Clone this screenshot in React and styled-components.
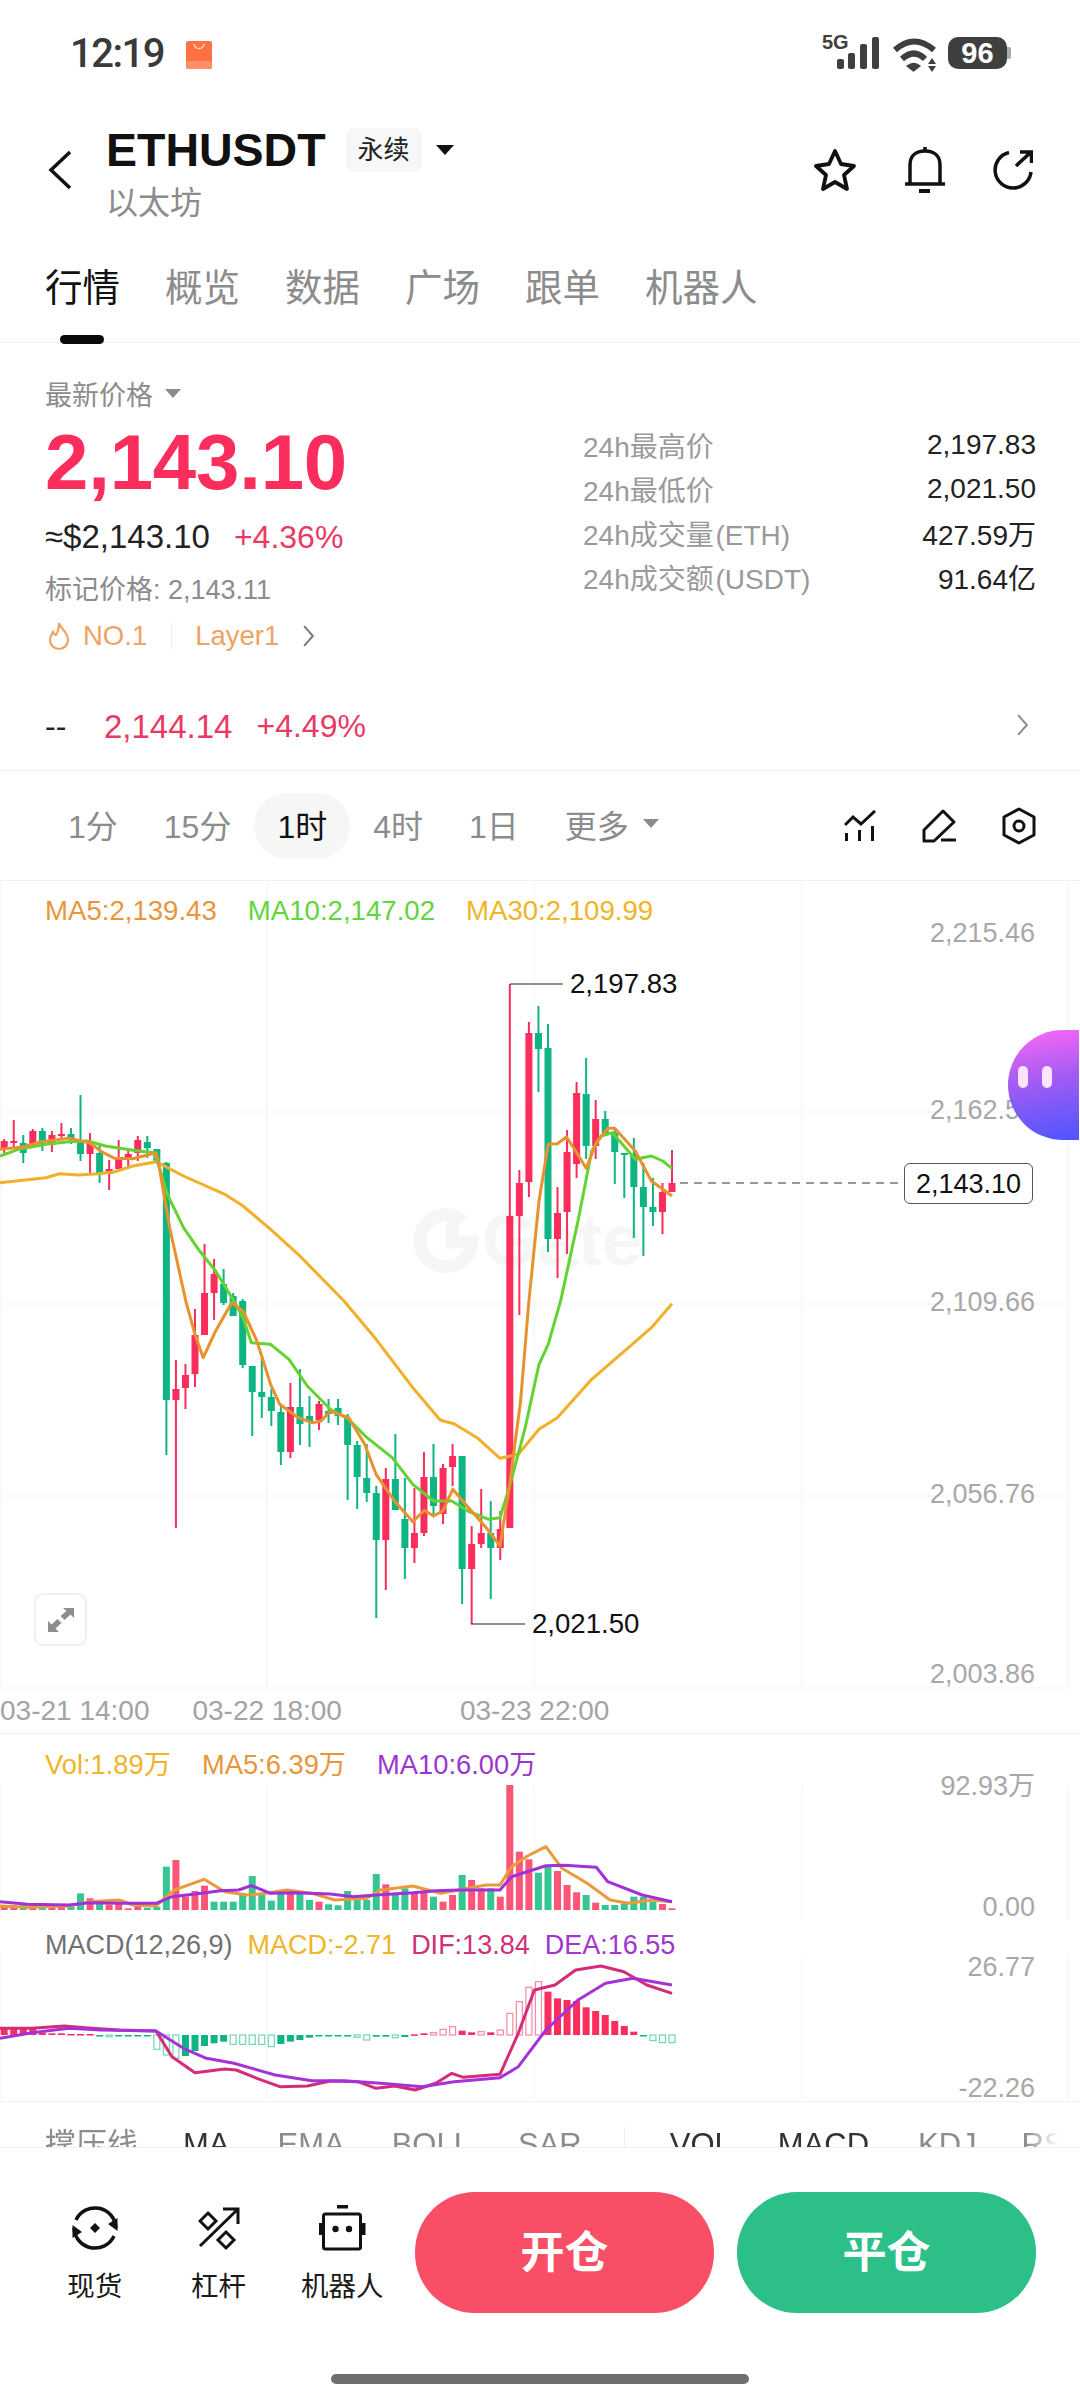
import styled, { createGlobalStyle } from "styled-components";

const GlobalStyle = createGlobalStyle`
  html, body { margin: 0; padding: 0; background: #fff; }
  * { box-sizing: border-box; }
`;

const RED = "#fa2d5c";
const GREEN = "#0fb483";
const VOL_RED = "#fb5677";
const VOL_GREEN = "#37c594";
const GRID = "#f3f3f4";

const Page = styled.div`
  position: relative;
  width: 1080px;
  height: 2400px;
  overflow: hidden;
  background: #fff;
  color: #1a1a1a;
  font-family: "Liberation Sans", "Noto Sans CJK SC", sans-serif;
`;

const StatusBar = styled.div`
  height: 110px;
  padding: 34px 73px 0 70px;
  display: flex;
  align-items: flex-start;
`;
const Clock = styled.div`
  font-family: Roboto, "Liberation Sans", sans-serif;
  font-size: 40px;
  font-weight: 500;
  line-height: 40px;
  color: #3a3a3a;
  letter-spacing: -1.5px;
  width: 116px;
`;
const StatusRight = styled.div`
  margin-left: auto;
  display: flex;
  align-items: flex-start;
`;
const Battery = styled.div`
  width: 59px;
  height: 32px;
  margin: 3px 0 0 10px;
  border-radius: 10px;
  background: #3f3f3f;
  color: #fff;
  font-size: 29px;
  font-weight: 700;
  line-height: 32px;
  text-align: center;
  position: relative;
  &::after {
    content: "";
    position: absolute;
    right: -4px;
    top: 10px;
    width: 4px;
    height: 12px;
    border-radius: 0 2px 2px 0;
    background: #aaa;
  }
`;

const Header = styled.div`
  height: 120px;
  padding: 0 47px 0 48px;
  display: flex;
  align-items: center;
`;
const TitleCol = styled.div`
  margin-left: 34px;
  padding-top: 5px;
  display: flex;
  flex-direction: column;
`;
const TitleRow = styled.div`
  height: 60px;
  display: flex;
  align-items: center;
`;
const Symbol = styled.div`
  font-size: 46.5px;
  font-weight: 700;
  color: #111;
`;
const Chip = styled.div`
  margin-left: 20px;
  width: 76px;
  height: 44px;
  border-radius: 8px;
  background: #f7f7f7;
  font-size: 26px;
  line-height: 44px;
  text-align: center;
  color: #222;
`;
const Caret = styled.span`
  width: 0;
  height: 0;
  margin-left: ${(p) => p.$gap || 0}px;
  border-left: ${(p) => p.$size}px solid transparent;
  border-right: ${(p) => p.$size}px solid transparent;
  border-top: ${(p) => p.$size * 1.2}px solid ${(p) => p.$color};
`;
const CoinName = styled.div`
  font-size: 32px;
  line-height: 46px;
  color: #8c8c8c;
`;
const HeaderIcons = styled.div`
  margin-left: auto;
  display: flex;
  align-items: center;
  gap: 48px;
`;

const TabBar = styled.div`
  height: 113px;
  padding: 36px 0 0 45px;
  display: flex;
  gap: 45px;
  border-bottom: 1px solid #f2f2f2;
`;
const Tab = styled.div`
  position: relative;
  height: 77px;
  font-size: 37.5px;
  line-height: 44px;
  color: ${(p) => (p.$active ? "#111" : "#8c8c8c")};
  &::after {
    content: "";
    display: ${(p) => (p.$active ? "block" : "none")};
    position: absolute;
    left: 15px;
    bottom: -1px;
    width: 44px;
    height: 9px;
    border-radius: 5px;
    background: #0a0a0a;
  }
`;

const Summary = styled.div`
  height: 342px;
  display: flex;
`;
const PriceCol = styled.div`
  width: 583px;
  padding: 30px 0 0 45px;
`;
const SmallLabel = styled.div`
  display: flex;
  align-items: center;
  height: 40px;
  font-size: 27px;
  color: #8c8c8c;
`;
const BigPrice = styled.div`
  height: 86px;
  margin-top: 6px;
  font-size: 78px;
  font-weight: 700;
  line-height: 86px;
  color: ${RED};
  letter-spacing: -0.2px;
`;
const ApproxRow = styled.div`
  height: 44px;
  margin-top: 10px;
  display: flex;
  align-items: center;
  font-size: 33px;
  color: #222;
`;
const Change = styled.span`
  margin-left: ${(p) => p.$gap}px;
  font-size: 32px;
  color: #e93a63;
`;
const MarkRow = styled(SmallLabel)`
  margin-top: 8px;
`;
const TagRow = styled.div`
  height: 40px;
  margin-top: 9px;
  display: flex;
  align-items: center;
  font-size: 27.5px;
  color: #f1a263;
`;
const TagDivider = styled.span`
  width: 1px;
  height: 26px;
  margin: 0 23px 0 24px;
  background: #f0f0f0;
`;
const TagChevron = styled.span`
  margin-left: 24px;
  display: flex;
`;
const StatsCol = styled.div`
  flex: 1;
  padding: 80px 44px 0 0;
`;
const StatRow = styled.div`
  height: 44px;
  display: flex;
  align-items: center;
  justify-content: space-between;
  font-size: 28px;
`;
const StatLabel = styled.span`
  color: #9a9a9a;
  word-spacing: -6px;
`;
const StatValue = styled.span`
  color: #222;
`;

const FutureRow = styled.div`
  height: 86px;
  padding: 0 51px 2px 45px;
  display: flex;
  align-items: center;
  font-size: 33px;
  border-bottom: 1px solid #f2f2f2;
`;
const Dashes = styled.span`
  width: 59px;
  color: #222;
  font-size: 32px;
`;
const FuturePrice = styled.span`
  color: #e93a63;
`;
const PushRight = styled.span`
  margin-left: auto;
  padding-bottom: 4px;
  display: flex;
`;

const TimeBar = styled.div`
  height: 110px;
  padding: 0 44px 0 45px;
  display: flex;
  align-items: center;
  border-bottom: 1px solid #f2f2f2;
`;
const TimeItem = styled.div`
  height: 66px;
  padding: 0 23px 4px;
  display: flex;
  align-items: center;
  border-radius: 33px;
  font-size: 32px;
  color: ${(p) => (p.$active ? "#111" : "#8c8c8c")};
  background: ${(p) => (p.$active ? "#f6f6f6" : "transparent")};
`;
const ChartTools = styled.div`
  margin-left: auto;
  display: flex;
  align-items: center;
  gap: 46px;
`;

const Pane = styled.div`
  position: relative;
  height: ${(p) => p.$height}px;
  border-bottom: ${(p) => (p.$line ? `1px solid ${GRID}` : "none")};
`;
const PaneSvg = styled.svg`
  display: block;
`;
const Legend = styled.div`
  position: absolute;
  left: 45px;
  top: ${(p) => p.$top}px;
  display: flex;
  gap: ${(p) => p.$gap}px;
  font-size: ${(p) => p.$size}px;
  line-height: 32px;
  white-space: nowrap;
`;
const LegendItem = styled.span`
  color: ${(p) => p.$color};
`;
const AxisTick = styled.div`
  position: absolute;
  right: 45px;
  top: ${(p) => p.$top}px;
  font-size: 27px;
  line-height: 32px;
  color: #a8a8a8;
  transform: translateY(-50%);
`;
const ExtremeLabel = styled.div`
  position: absolute;
  left: ${(p) => p.$left}px;
  top: ${(p) => p.$top}px;
  font-size: 27.6px;
  line-height: 32px;
  color: #111;
  transform: translateY(-50%);
`;
const LastPrice = styled.div`
  position: absolute;
  left: 904px;
  top: 282px;
  width: 129px;
  height: 41px;
  border: 1px solid #555;
  border-radius: 6px;
  background: #fff;
  font-size: 27px;
  line-height: 40px;
  text-align: center;
  color: #111;
`;
const ExpandButton = styled.div`
  position: absolute;
  left: 34px;
  top: 712px;
  width: 53px;
  height: 53px;
  display: flex;
  align-items: center;
  justify-content: center;
  border: 2px solid #f0f0f0;
  border-radius: 9px;
  background: #fff;
`;
const DateRow = styled.div`
  height: 45px;
  display: flex;
  align-items: center;
  font-size: 28px;
  color: #a3a3a3;
  border-bottom: 1px solid ${GRID};
`;
const DateItem = styled.span`
  margin-left: ${(p) => p.$gap}px;
`;

const IndicatorRow = styled.div`
  height: 45px;
  overflow: hidden;
  padding: 24px 0 0 45px;
  display: flex;
  align-items: flex-start;
  font-size: 31px;
  line-height: 38px;
  white-space: nowrap;
  mask-image: linear-gradient(to right, #000 95%, transparent 98%);
`;
const Indicator = styled.span`
  flex: none;
  margin-left: ${(p) => p.$gap || 0}px;
  color: ${(p) => (p.$on ? "#333" : "#8c8c8c")};
`;
const IndicatorDivider = styled.span`
  flex: none;
  width: 1px;
  height: 30px;
  margin-left: 42px;
  background: #f0f0f0;
`;

const BottomBar = styled.div`
  height: 253px;
  padding-top: 44px;
  border-top: 1px solid #f0f0f0;
  display: flex;
  flex-direction: column;
`;
const ActionRow = styled.div`
  height: 121px;
  padding: 0 44px 0 33px;
  display: flex;
  align-items: flex-start;
`;
const Tool = styled.div`
  width: 124px;
  height: 121px;
  display: flex;
  flex-direction: column;
  align-items: center;
  font-size: 27.5px;
  color: #1a1a1a;
`;
const ToolIcon = styled.div`
  height: 72px;
  padding-top: 12px;
`;
const TradeButton = styled.div`
  flex: none;
  width: 299px;
  height: 121px;
  margin-left: ${(p) => p.$gap}px;
  border-radius: 60px;
  background: ${(p) => p.$color};
  color: #fff;
  font-size: 44px;
  font-weight: 700;
  line-height: 121px;
  text-align: center;
`;
const HomeBar = styled.div`
  width: 418px;
  height: 10px;
  margin: 61px auto 0;
  border-radius: 5px;
  background: #6f6f6f;
`;

const Mascot = styled.div`
  position: absolute;
  right: 1px;
  top: 1030px;
  width: 71px;
  height: 110px;
  display: flex;
  gap: 14px;
  padding: 36px 0 0 10px;
  border-radius: 55px 0 0 55px;
  background: linear-gradient(170deg, #ff68f5 0%, #a35cf3 45%, #4d55ff 100%);
`;
const MascotEye = styled.span`
  width: 10px;
  height: 22px;
  border-radius: 5px;
  background: #fbe4fb;
`;

// candles from the newest one back: [isRed, wickTop, bodyTop, bodyBottom, wickBottom]
const candles = [
  [1, 1149, 1182, 1191, 1191], [1, 1182, 1191, 1211, 1233], [0, 1177, 1206, 1211, 1225], [0, 1162, 1186, 1206, 1255],
  [0, 1137, 1153, 1186, 1237], [0, 1152, 1152, 1154, 1197], [0, 1127, 1132, 1151, 1183], [0, 1110, 1118, 1132, 1133],
  [1, 1099, 1118, 1145, 1158], [0, 1057, 1093, 1145, 1158], [1, 1081, 1092, 1163, 1177], [1, 1129, 1151, 1211, 1253],
  [1, 1186, 1212, 1238, 1277], [0, 1023, 1047, 1238, 1251], [0, 1005, 1032, 1048, 1091], [1, 1021, 1032, 1181, 1196],
  [1, 1169, 1182, 1215, 1314], [1, 983, 1215, 1527, 1527], [1, 1510, 1528, 1547, 1559], [0, 1500, 1532, 1547, 1598],
  [1, 1488, 1532, 1543, 1547], [1, 1525, 1543, 1568, 1623], [0, 1455, 1455, 1568, 1603], [1, 1443, 1455, 1466, 1485],
  [1, 1463, 1467, 1513, 1523], [0, 1443, 1476, 1505, 1513], [1, 1451, 1476, 1532, 1535], [1, 1487, 1532, 1547, 1562],
  [0, 1477, 1518, 1547, 1578], [0, 1433, 1478, 1509, 1509], [1, 1467, 1478, 1539, 1589], [0, 1485, 1492, 1539, 1617],
  [0, 1443, 1477, 1492, 1501], [0, 1440, 1444, 1476, 1508], [0, 1413, 1417, 1444, 1499], [0, 1398, 1407, 1415, 1424],
  [0, 1398, 1410, 1413, 1422], [1, 1400, 1403, 1419, 1429], [0, 1395, 1415, 1421, 1446], [0, 1368, 1406, 1423, 1444],
  [1, 1382, 1406, 1451, 1457], [0, 1405, 1411, 1451, 1464], [0, 1388, 1396, 1410, 1425], [0, 1357, 1391, 1396, 1417],
  [0, 1365, 1365, 1391, 1435], [0, 1298, 1300, 1364, 1367], [0, 1292, 1295, 1315, 1315], [0, 1268, 1283, 1302, 1304],
  [1, 1258, 1273, 1292, 1319], [1, 1243, 1292, 1334, 1334], [1, 1308, 1334, 1373, 1386], [1, 1363, 1374, 1387, 1408],
  [1, 1359, 1388, 1399, 1527], [0, 1161, 1162, 1399, 1454], [0, 1148, 1148, 1162, 1162], [0, 1135, 1141, 1147, 1157],
  [1, 1135, 1139, 1152, 1160], [1, 1148, 1153, 1157, 1165], [1, 1139, 1157, 1168, 1168], [1, 1159, 1168, 1173, 1189],
  [0, 1142, 1152, 1172, 1182], [1, 1132, 1142, 1153, 1172], [0, 1094, 1141, 1153, 1160], [0, 1127, 1133, 1137, 1143],
  [1, 1122, 1133, 1134, 1137], [1, 1130, 1134, 1144, 1151], [0, 1127, 1130, 1144, 1150], [1, 1128, 1130, 1145, 1146],
  [0, 1134, 1142, 1152, 1162], [1, 1119, 1140, 1142, 1147], [1, 1138, 1140, 1148, 1152],
];

// volume bars from the newest one back: [isRed, top]
const volumes = [
  [1, 565], [1, 552], [0, 545], [0, 530], [0, 530], [0, 550], [0, 555], [0, 555], [1, 548], [0, 525], [1, 517], [1, 495],
  [1, 453], [0, 440], [0, 458], [1, 418], [1, 395], [1, 195], [1, 530], [0, 505], [1, 505], [1, 480], [0, 465], [1, 525],
  [1, 545], [0, 530], [1, 515], [1, 518], [0, 505], [0, 525], [1, 493], [0, 462], [0, 540], [0, 525], [0, 513], [0, 556],
  [0, 553], [1, 545], [0, 540], [0, 522], [1, 515], [0, 518], [0, 542], [0, 525], [0, 468], [0, 525], [0, 545], [0, 545],
  [0, 545], [1, 497], [1, 513], [1, 530], [1, 420], [0, 440], [0, 560], [0, 563], [1, 558], [1, 565], [1, 550], [1, 553],
  [0, 552], [1, 535], [0, 520], [0, 560], [1, 560], [1, 558], [0, 558], [1, 555], [0, 555], [1, 555], [1, 555],
];

// macd bars from the newest one back: [level, hollow]; level above the zero at 945 is red
const macdBars = [
  [968, 1], [968, 1], [962, 1], [948, 0], [935, 0], [918, 0], [903, 0], [885, 0], [873, 0], [862, 0], [843, 0], [840, 0],
  [835, 0], [815, 0], [785, 1], [802, 1], [845, 1], [880, 1], [930, 1], [937, 0], [935, 1], [937, 0], [932, 0], [920, 1],
  [928, 1], [938, 1], [940, 0], [943, 0], [951, 0], [953, 1], [950, 0], [950, 0], [960, 1], [952, 1], [948, 0], [947, 0],
  [946, 0], [946, 0], [953, 0], [960, 0], [965, 0], [972, 0], [980, 1], [973, 1], [973, 1], [973, 1], [973, 1], [965, 0],
  [970, 0], [978, 0], [993, 0], [1008, 0], [1015, 1], [1005, 1], [988, 1], [948, 0], [947, 0], [947, 0], [948, 0], [950, 1],
  [948, 0], [942, 0], [942, 0], [942, 0], [940, 0], [940, 0], [938, 0], [925, 0], [925, 0], [925, 0], [925, 0],
];

const candleX = (k) => 672 - 9.54 * k;
const toPoints = (list, base) => list.map(([x, y]) => `${(x / 2.18).toFixed(1)},${(base + y / 3).toFixed(1)}`).join(" ");

const ma30 = toPoints([[0, 845], [50, 838], [100, 830], [130, 818], [170, 822], [215, 818], [250, 812], [290, 795], [340, 782], [400, 825], [490, 880], [530, 915], [590, 985], [650, 1060], [750, 1200], [820, 1315], [900, 1460], [960, 1558], [990, 1568], [1040, 1610], [1090, 1672], [1130, 1660], [1175, 1585], [1215, 1550], [1290, 1435], [1370, 1340], [1420, 1280], [1465, 1208]], 900);
const ma5 = toPoints([[0, 745], [50, 738], [90, 722], [150, 712], [195, 725], [225, 755], [250, 772], [290, 773], [340, 755], [345, 782], [370, 980], [405, 1200], [425, 1300], [443, 1370], [470, 1290], [505, 1205], [530, 1230], [560, 1320], [590, 1450], [610, 1510], [650, 1550], [680, 1565], [700, 1560], [720, 1530], [760, 1550], [795, 1630], [820, 1720], [860, 1800], [900, 1862], [925, 1828], [945, 1845], [965, 1830], [987, 1765], [1015, 1810], [1060, 1880], [1090, 1935], [1110, 1760], [1135, 1500], [1153, 1200], [1175, 900], [1195, 730], [1215, 728], [1235, 708], [1255, 750], [1278, 802], [1300, 725], [1325, 682], [1340, 682], [1385, 750], [1420, 840], [1465, 885]], 900);
const ma10 = toPoints([[0, 765], [40, 745], [100, 730], [150, 722], [190, 720], [230, 735], [290, 748], [335, 755], [345, 790], [365, 880], [400, 980], [430, 1040], [470, 1110], [510, 1200], [530, 1250], [548, 1325], [590, 1330], [630, 1375], [670, 1455], [720, 1525], [760, 1555], [800, 1610], [855, 1670], [900, 1750], [945, 1800], [985, 1800], [1020, 1830], [1065, 1855], [1090, 1850], [1110, 1760], [1145, 1580], [1175, 1390], [1195, 1330], [1222, 1200], [1260, 960], [1290, 750], [1310, 705], [1335, 695], [1385, 775], [1420, 765], [1445, 780], [1465, 802]], 900);
const volMa5 = toPoints([[0, 558], [60, 562], [150, 558], [195, 545], [260, 540], [290, 555], [340, 558], [380, 510], [445, 478], [490, 515], [540, 525], [580, 520], [625, 510], [680, 520], [730, 540], [800, 535], [830, 510], [900, 498], [960, 520], [1000, 510], [1060, 495], [1090, 495], [1115, 440], [1150, 408], [1190, 380], [1225, 445], [1280, 490], [1330, 540], [1370, 550], [1420, 540], [1465, 545]], 1720);
const volMa10 = toPoints([[0, 545], [60, 553], [150, 555], [195, 548], [270, 550], [340, 550], [375, 530], [440, 520], [480, 512], [520, 510], [548, 497], [590, 520], [640, 518], [720, 522], [770, 530], [820, 525], [900, 518], [950, 512], [1000, 510], [1090, 510], [1115, 470], [1190, 437], [1230, 436], [1300, 442], [1325, 485], [1400, 525], [1465, 545]], 1720);
const dif = toPoints([[0, 925], [70, 925], [140, 918], [200, 925], [260, 930], [340, 933], [375, 1010], [425, 1058], [490, 1047], [515, 1050], [560, 1075], [610, 1100], [670, 1098], [720, 1083], [780, 1085], [820, 1105], [860, 1098], [905, 1110], [950, 1090], [985, 1060], [1010, 1072], [1090, 1063], [1130, 940], [1165, 810], [1210, 795], [1255, 750], [1310, 738], [1360, 755], [1410, 795], [1465, 820]], 1720);
const dea = toPoints([[0, 955], [70, 938], [150, 925], [220, 930], [340, 933], [400, 985], [450, 1015], [510, 1030], [600, 1065], [680, 1082], [750, 1082], [830, 1090], [920, 1100], [990, 1085], [1090, 1073], [1130, 1040], [1190, 930], [1260, 840], [1320, 790], [1380, 775], [1465, 795]], 1720);

function BagIcon() {
  return (
    <svg width="26" height="30" viewBox="0 0 26 30" style={{ marginTop: 7 }}>
      <rect width="26" height="28" rx="2" fill="#ff7043" />
      <rect y="20" width="26" height="8" rx="2" fill="#ff8f66" />
      <path d="M8 3c1 6 9 6 10 0" fill="none" stroke="#ffd9c8" strokeWidth="1.5" />
    </svg>
  );
}

function SignalIcon() {
  return (
    <svg width="60" height="38" viewBox="0 0 60 38" style={{ marginTop: -1 }}>
      <text x="2" y="16" fontFamily="Liberation Sans" fontWeight="700" fontSize="20" fill="#3f3f3f">5G</text>
      <rect x="17" y="26" width="7" height="10" rx="2" fill="#3f3f3f" />
      <rect x="28" y="20" width="7" height="16" rx="2" fill="#3f3f3f" />
      <rect x="40" y="11" width="7" height="25" rx="2" fill="#3f3f3f" />
      <rect x="52" y="4" width="7" height="32" rx="2" fill="#3f3f3f" />
    </svg>
  );
}

function WifiIcon() {
  return (
    <svg width="46" height="36" viewBox="0 0 46 36" style={{ marginLeft: 12, marginTop: 4 }}>
      <path d="M3 12Q22-5 42 12" fill="none" stroke="#3f3f3f" strokeWidth="6" />
      <path d="M10 21Q22 10 33 21" fill="none" stroke="#3f3f3f" strokeWidth="6" />
      <path d="M15 28Q22 23 28 28L21.500 33z" fill="#3f3f3f" stroke="#3f3f3f" strokeWidth="1.500" strokeLinejoin="round" />
      <path d="M36 26l4-6 4 6zM36 28h8l-4 6z" fill="#3f3f3f" />
    </svg>
  );
}

function BackIcon() {
  return (
    <svg width="24" height="40" viewBox="0 0 24 40">
      <path d="M22 2L3 20l19 18" fill="none" stroke="#111" strokeWidth="3.5" />
    </svg>
  );
}

function StarIcon() {
  return (
    <svg width="44" height="44" viewBox="0 0 44 44">
      <path d="M22 3l6 13 13 2-10 9 3 14-12-7-12 7 3-14L3 18l13-2z" fill="none" stroke="#111" strokeWidth="3.800" strokeLinejoin="round" />
    </svg>
  );
}

function BellIcon() {
  return (
    <svg width="40" height="46" viewBox="0 0 40 46">
      <path d="M5 36V18C5 9 11 4 20 4s15 5 15 14v18" fill="none" stroke="#111" strokeWidth="3.500" />
      <path d="M0 37h40" stroke="#111" strokeWidth="3.500" />
      <path d="M20 0v4" stroke="#111" strokeWidth="3.500" />
      <rect x="14" y="42" width="11" height="4" fill="#111" />
    </svg>
  );
}

function ShareIcon() {
  return (
    <svg width="40" height="40" viewBox="0 0 40 40">
      <path d="M16 2.500A18 18 0 1 0 38 22" fill="none" stroke="#111" strokeWidth="3.500" />
      <path d="M23 16L38 2M27 2h11.500v11" fill="none" stroke="#111" strokeWidth="3.500" />
    </svg>
  );
}

function ChevronIcon({ color, height }) {
  return (
    <svg width={height * 0.55} height={height} viewBox="0 0 11 20">
      <path d="M1 1l8 9-8 9" fill="none" stroke={color} strokeWidth="1.800" />
    </svg>
  );
}

function FlameIcon() {
  return (
    <svg width="22" height="30" viewBox="0 0 22 30" style={{ margin: "0 13px 0 3px" }}>
      <path d="M11 2c1 5 9 9 9 17a9 9 0 0 1-18 0c0-4 2-6 3-8 1 2 2 3 3 3 2-3 3-7 3-12z" fill="none" stroke="#f1a263" strokeWidth="2.200" />
    </svg>
  );
}

function LineToolIcon() {
  return (
    <svg width="32" height="32" viewBox="0 0 32 32">
      <path d="M1 15l8-8 8 7L31 1" fill="none" stroke="#111" strokeWidth="3" />
      <path d="M2.500 23v8M15.500 20v11M28.500 16v15" stroke="#111" strokeWidth="3" />
    </svg>
  );
}

function PenToolIcon() {
  return (
    <svg width="34" height="34" viewBox="0 0 34 34">
      <path d="M2 21L21 2l11 11-20 19H2z" fill="none" stroke="#111" strokeWidth="3" strokeLinejoin="round" />
      <path d="M19 31h15" stroke="#111" strokeWidth="3" />
    </svg>
  );
}

function HexToolIcon() {
  return (
    <svg width="34" height="38" viewBox="0 0 34 38">
      <path d="M17 2l15 8v18l-15 8-15-8V10z" fill="none" stroke="#111" strokeWidth="3" strokeLinejoin="round" />
      <circle cx="17" cy="19" r="5" fill="none" stroke="#111" strokeWidth="3" />
    </svg>
  );
}

function ExpandIcon() {
  return (
    <svg width="28" height="26" viewBox="0 0 28 26">
      <path d="M16 1h11v10l-3.500-3.500-6 5.500-4-4 6-5zM1 25V14l3.500 3.500 6-5.500 4 4-6 5.500L12 25z" fill="#8d8d8d" />
    </svg>
  );
}

function SpotIcon() {
  return (
    <svg width="48" height="48" viewBox="0 0 48 48">
      <path d="M5 16A21 21 0 0 1 45 24" fill="none" stroke="#111" strokeWidth="3.500" />
      <path d="M43 32A21 21 0 0 1 3 24" fill="none" stroke="#111" strokeWidth="3.500" />
      <path d="M46.500 27L37 20l9.500-6zM1.500 21l9.500 7-9.500 6z" fill="#111" />
      <path d="M24 19l5 5-5 5-5-5z" fill="#111" />
    </svg>
  );
}

function LeverIcon() {
  return (
    <svg width="42" height="48" viewBox="0 0 42 48">
      <path d="M2 42L39 6M25 5h15v15" fill="none" stroke="#111" strokeWidth="3" />
      <path d="M10 9l8 8-8 8-8-8zM28 28l8 8-8 8-8-8z" fill="none" stroke="#111" strokeWidth="3" />
    </svg>
  );
}

function RobotIcon() {
  return (
    <svg width="48" height="48" viewBox="0 0 48 48">
      <rect x="19" y="1" width="11" height="3.500" fill="#111" />
      <rect x="5.500" y="10" width="37" height="35" rx="2" fill="none" stroke="#111" strokeWidth="3" />
      <rect x="1" y="19" width="3.500" height="12" fill="#111" />
      <rect x="44" y="19" width="3.500" height="12" fill="#111" />
      <circle cx="17.500" cy="25" r="3.200" fill="#111" />
      <circle cx="31" cy="25" r="3.200" fill="#111" />
    </svg>
  );
}

function GridLines({ top, bottom, rows = [] }) {
  return (
    <g stroke={GRID} strokeWidth="1">
      {[1, 267, 534, 802, 1068].map((x) => (
        <line key={x} x1={x} x2={x} y1={top} y2={bottom} />
      ))}
      {rows.map((y) => (
        <line key={y} x1="0" x2="1068" y1={y} y2={y} />
      ))}
    </g>
  );
}

function MainChart() {
  return (
    <PaneSvg width="1080" height="808" viewBox="0 880 1080 808">
      <GridLines top={881} bottom={1688} rows={[1111, 1303, 1495, 1687]} />
      <path d="M463 1220a26 26 0 1 0 9 21h-20v-14h-6" fill="none" stroke="#f5f6f6" strokeWidth="13" />
      <text x="482" y="1264" fontFamily="Liberation Sans" fontWeight="700" fontSize="72" fill="#f5f6f6">Gate</text>
      {candles.map(([isRed, wickTop, bodyTop, bodyBottom, wickBottom], k) => (
        <g key={k} fill={isRed ? RED : GREEN}>
          <rect x={candleX(k) - 1} y={wickTop} width="2" height={wickBottom - wickTop} />
          <rect x={candleX(k) - 3.5} y={bodyTop} width="7" height={Math.max(bodyBottom - bodyTop, 2)} />
        </g>
      ))}
      <polyline points={ma30} fill="none" stroke="#f0b02a" strokeWidth="3" strokeLinejoin="round" />
      <polyline points={ma10} fill="none" stroke="#63d334" strokeWidth="3" strokeLinejoin="round" />
      <polyline points={ma5} fill="none" stroke="#e8922e" strokeWidth="3" strokeLinejoin="round" />
      <path d="M510 983h53M471 1623h54" stroke="#222" strokeWidth="1.200" fill="none" />
      <line x1="680" x2="904" y1="1182" y2="1182" stroke="#777" strokeWidth="1.500" strokeDasharray="8 6" />
    </PaneSvg>
  );
}

function VolumeChart() {
  return (
    <PaneSvg width="1080" height="192" viewBox="0 1734 1080 192">
      <GridLines top={1785} bottom={1920} />
      {volumes.map(([isRed, top], k) => (
        <rect key={k} x={candleX(k) - 3.5} y={1720 + top / 3} width="7" height={1910 - (1720 + top / 3)} fill={isRed ? VOL_RED : VOL_GREEN} />
      ))}
      <polyline points={volMa5} fill="none" stroke="#ea9a3a" strokeWidth="3" strokeLinejoin="round" />
      <polyline points={volMa10} fill="none" stroke="#a030d8" strokeWidth="3" strokeLinejoin="round" />
    </PaneSvg>
  );
}

function MacdChart() {
  return (
    <PaneSvg width="1080" height="175" viewBox="0 1926 1080 175">
      <GridLines top={1955} bottom={2100} />
      {macdBars.map(([level, hollow], k) => {
        const isRed = level < 945;
        const y = 1720 + Math.min(level, 945) / 3;
        const h = Math.max(Math.abs(level - 945) / 3, 1.500);
        const color = isRed ? RED : GREEN;
        return hollow ? (
          <rect key={k} x={candleX(k) - 3} y={y} width="6" height={h} fill="#fff" stroke={isRed ? "#f58aa2" : "#6fd4b4"} strokeWidth="1.200" />
        ) : (
          <rect key={k} x={candleX(k) - 3.5} y={y} width="7" height={h} fill={color} />
        );
      })}
      <polyline points={dif} fill="none" stroke="#d42c78" strokeWidth="3" strokeLinejoin="round" />
      <polyline points={dea} fill="none" stroke="#a532d8" strokeWidth="3" strokeLinejoin="round" />
    </PaneSvg>
  );
}

export default function App() {
  return (
    <Page>
      <GlobalStyle />
      <StatusBar>
        <Clock>12:19</Clock>
        <BagIcon />
        <StatusRight>
          <SignalIcon />
          <WifiIcon />
          <Battery>96</Battery>
        </StatusRight>
      </StatusBar>

      <Header>
        <BackIcon />
        <TitleCol>
          <TitleRow>
            <Symbol>ETHUSDT</Symbol>
            <Chip>永续</Chip>
            <Caret $size={9} $color="#111" $gap={14} />
          </TitleRow>
          <CoinName>以太坊</CoinName>
        </TitleCol>
        <HeaderIcons>
          <StarIcon />
          <BellIcon />
          <ShareIcon />
        </HeaderIcons>
      </Header>

      <TabBar>
        <Tab $active>行情</Tab>
        <Tab>概览</Tab>
        <Tab>数据</Tab>
        <Tab>广场</Tab>
        <Tab>跟单</Tab>
        <Tab>机器人</Tab>
      </TabBar>

      <Summary>
        <PriceCol>
          <SmallLabel>
            最新价格
            <Caret $size={8} $color="#8c8c8c" $gap={12} />
          </SmallLabel>
          <BigPrice>2,143.10</BigPrice>
          <ApproxRow>
            ≈$2,143.10
            <Change $gap={24}>+4.36%</Change>
          </ApproxRow>
          <MarkRow>标记价格: 2,143.11</MarkRow>
          <TagRow>
            <FlameIcon />
            NO.1
            <TagDivider />
            Layer1
            <TagChevron>
              <ChevronIcon color="#777" height={22} />
            </TagChevron>
          </TagRow>
        </PriceCol>
        <StatsCol>
          <StatRow>
            <StatLabel>24h最高价</StatLabel>
            <StatValue>2,197.83</StatValue>
          </StatRow>
          <StatRow>
            <StatLabel>24h最低价</StatLabel>
            <StatValue>2,021.50</StatValue>
          </StatRow>
          <StatRow>
            <StatLabel>24h成交量 (ETH)</StatLabel>
            <StatValue>427.59万</StatValue>
          </StatRow>
          <StatRow>
            <StatLabel>24h成交额 (USDT)</StatLabel>
            <StatValue>91.64亿</StatValue>
          </StatRow>
        </StatsCol>
      </Summary>

      <FutureRow>
        <Dashes>--</Dashes>
        <FuturePrice>2,144.14</FuturePrice>
        <Change $gap={24}>+4.49%</Change>
        <PushRight>
          <ChevronIcon color="#8c8c8c" height={22} />
        </PushRight>
      </FutureRow>

      <TimeBar>
        <TimeItem>1分</TimeItem>
        <TimeItem>15分</TimeItem>
        <TimeItem $active>1时</TimeItem>
        <TimeItem>4时</TimeItem>
        <TimeItem>1日</TimeItem>
        <TimeItem>
          更多
          <Caret $size={8} $color="#8c8c8c" $gap={14} />
        </TimeItem>
        <ChartTools>
          <LineToolIcon />
          <PenToolIcon />
          <HexToolIcon />
        </ChartTools>
      </TimeBar>

      <Pane $height={808}>
        <MainChart />
        <Legend $top={14} $gap={31} $size={27.6}>
          <LegendItem $color="#e8963a">MA5:2,139.43</LegendItem>
          <LegendItem $color="#5fd63a">MA10:2,147.02</LegendItem>
          <LegendItem $color="#f0b428">MA30:2,109.99</LegendItem>
        </Legend>
        <AxisTick $top={52}>2,215.46</AxisTick>
        <AxisTick $top={229}>2,162.56</AxisTick>
        <AxisTick $top={421}>2,109.66</AxisTick>
        <AxisTick $top={613}>2,056.76</AxisTick>
        <AxisTick $top={793}>2,003.86</AxisTick>
        <ExtremeLabel $left={570} $top={103}>2,197.83</ExtremeLabel>
        <ExtremeLabel $left={532} $top={743}>2,021.50</ExtremeLabel>
        <LastPrice>2,143.10</LastPrice>
        <ExpandButton>
          <ExpandIcon />
        </ExpandButton>
      </Pane>

      <DateRow>
        <DateItem $gap={0}>03-21 14:00</DateItem>
        <DateItem $gap={43}>03-22 18:00</DateItem>
        <DateItem $gap={118}>03-23 22:00</DateItem>
      </DateRow>

      <Pane $height={192}>
        <VolumeChart />
        <Legend $top={15} $gap={31} $size={27.3}>
          <LegendItem $color="#f0b428">Vol:1.89万</LegendItem>
          <LegendItem $color="#e8963a">MA5:6.39万</LegendItem>
          <LegendItem $color="#9b35d0">MA10:6.00万</LegendItem>
        </Legend>
        <AxisTick $top={52}>92.93万</AxisTick>
        <AxisTick $top={173}>0.00</AxisTick>
      </Pane>

      <Pane $height={176} $line>
        <MacdChart />
        <Legend $top={3} $gap={15} $size={27}>
          <LegendItem $color="#707070">MACD(12,26,9)</LegendItem>
          <LegendItem $color="#f0b428">MACD:-2.71</LegendItem>
          <LegendItem $color="#d0307a">DIF:13.84</LegendItem>
          <LegendItem $color="#a035d0">DEA:16.55</LegendItem>
        </Legend>
        <AxisTick $top={41}>26.77</AxisTick>
        <AxisTick $top={162}>-22.26</AxisTick>
      </Pane>

      <IndicatorRow>
        <Indicator>撑压线</Indicator>
        <Indicator $on $gap={45}>MA</Indicator>
        <Indicator $gap={48}>EMA</Indicator>
        <Indicator $gap={47}>BOLL</Indicator>
        <Indicator $gap={47}>SAR</Indicator>
        <IndicatorDivider />
        <Indicator $on $gap={45}>VOL</Indicator>
        <Indicator $on $gap={46}>MACD</Indicator>
        <Indicator $gap={49}>KDJ</Indicator>
        <Indicator $gap={45}>RSI</Indicator>
      </IndicatorRow>

      <BottomBar>
        <ActionRow>
          <Tool>
            <ToolIcon>
              <SpotIcon />
            </ToolIcon>
            现货
          </Tool>
          <Tool>
            <ToolIcon>
              <LeverIcon />
            </ToolIcon>
            杠杆
          </Tool>
          <Tool>
            <ToolIcon>
              <RobotIcon />
            </ToolIcon>
            机器人
          </Tool>
          <TradeButton $color="#f94f66" $gap={11}>开仓</TradeButton>
          <TradeButton $color="#2cc088" $gap={23}>平仓</TradeButton>
        </ActionRow>
        <HomeBar />
      </BottomBar>

      <Mascot>
        <MascotEye />
        <MascotEye />
      </Mascot>
    </Page>
  );
}
